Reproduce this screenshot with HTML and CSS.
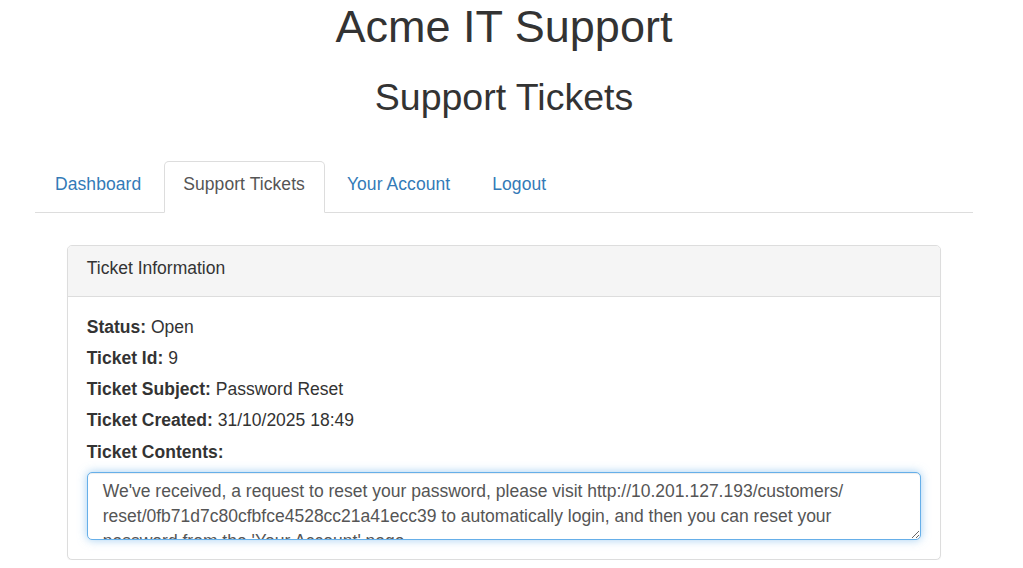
FILE: index.html
```html
<!DOCTYPE html>
<html lang="en">
<head>
<meta charset="utf-8">
<title>Acme IT Support - Support Tickets</title>
<link rel="stylesheet" href="styles.css">
</head>
<body>
<div class="page">
  <div class="container">
    <h1 class="site-title">Acme IT Support</h1>
    <h2 class="page-title">Support Tickets</h2>
    <ul class="nav-tabs">
      <li><a href="#">Dashboard</a></li>
      <li class="active"><a href="#">Support Tickets</a></li>
      <li><a href="#">Your Account</a></li>
      <li><a href="#">Logout</a></li>
    </ul>
    <div class="panel">
      <div class="panel-heading">Ticket Information</div>
      <div class="panel-body">
        <div class="field"><b>Status:</b> Open</div>
        <div class="field"><b>Ticket Id:</b> 9</div>
        <div class="field"><b>Ticket Subject:</b> Password Reset</div>
        <div class="field"><b>Ticket Created:</b> 31/10/2025 18:49</div>
        <div class="field"><b>Ticket Contents:</b></div>
        <textarea class="ticket-text" rows="2">We've received, a request to reset your password, please visit http://10.201.127.193/customers/&#8203;reset/0fb71d7c80cfbfce4528cc21a41ecc39 to automatically login, and then you can reset your password from the 'Your Account' page.</textarea>
      </div>
    </div>
  </div>
</div>
</body>
</html>
```
FILE: styles.css
```css
html, body {
  margin: 0;
  padding: 0;
  background: #fff;
}
body {
  font-family: "Liberation Sans", Arial, Helvetica, sans-serif;
  font-size: 17.5px;
  line-height: 25px;
  color: #333;
}
.page {
  width: 1008px;
}
.container {
  width: 937.5px;
  margin: 0 auto;
}
.site-title {
  margin: 2px 0 25px;
  font-size: 45px;
  line-height: 49.5px;
  font-weight: 500;
  text-align: center;
}
.page-title {
  margin: 0 0 43px;
  font-size: 37.5px;
  line-height: 41.25px;
  font-weight: 500;
  text-align: center;
}
.nav-tabs {
  list-style: none;
  margin: 0;
  padding: 0;
  display: flex;
  border-bottom: 1px solid #ddd;
}
.nav-tabs li {
  margin-bottom: -1px;
}
.nav-tabs a {
  display: block;
  margin-right: 2.5px;
  padding: 10.5px 18.75px 14.5px;
  border: 1px solid transparent;
  border-radius: 5px 5px 0 0;
  color: #337ab7;
  text-decoration: none;
  line-height: 25px;
  letter-spacing: 0.07px;
}
.nav-tabs .active a {
  color: #555;
  background: #fff;
  border-color: #ddd #ddd transparent;
}
.panel {
  margin: 32px 31.75px 0;
  border: 1px solid #ddd;
  border-radius: 5px;
  background: #fff;
  box-shadow: 0 1px 1px rgba(0, 0, 0, 0.05);
}
.panel-heading {
  padding: 10.5px 18.75px 14.5px;
  background: #f5f5f5;
  border-bottom: 1px solid #ddd;
  border-radius: 4px 4px 0 0;
  line-height: 25px;
}
.panel-body {
  padding: 17.75px 18.75px 18.75px;
}
.field {
  line-height: 25px;
  margin-bottom: 6.25px;
}
.field b {
  font-weight: bold;
}
.ticket-text {
  display: block;
  box-sizing: border-box;
  width: 100%;
  height: 67.5px;
  margin: 7.75px 0 0;
  padding: 6px 15px 9px;
  font-family: "Liberation Sans", Arial, Helvetica, sans-serif;
  font-size: 17.5px;
  line-height: 25px;
  color: #555;
  background: #fff;
  border: 1px solid #66afe9;
  border-radius: 5px;
  outline: 0;
  box-shadow: inset 0 1px 1px rgba(0, 0, 0, 0.075), 0 0 10px rgba(102, 175, 233, 0.6);
  overflow-x: hidden;
  overflow-y: scroll;
  resize: vertical;
}
.ticket-text::-webkit-scrollbar {
  width: 5px;
  background: #f4f4f4;
}
.ticket-text::-webkit-scrollbar-thumb {
  background: #ececec;
}
```
